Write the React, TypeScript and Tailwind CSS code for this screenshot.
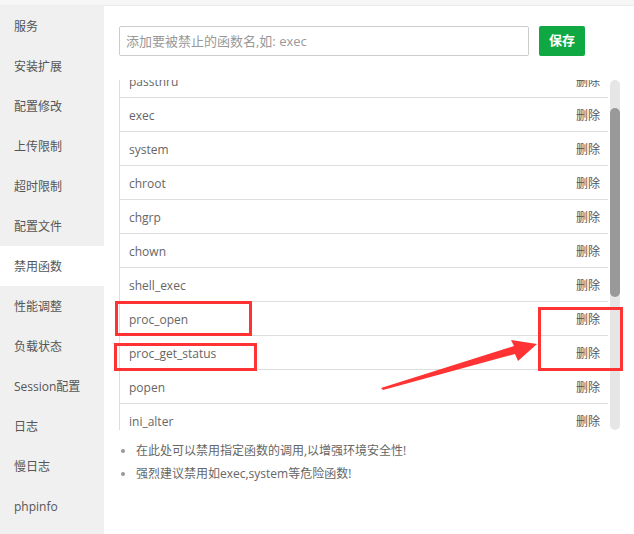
import React from "react";

const menu = ["服务", "安装扩展", "配置修改", "上传限制", "超时限制", "配置文件", "禁用函数", "性能调整", "负载状态", "Session配置", "日志", "慢日志", "phpinfo"];
const funcs = ["passthru", "exec", "system", "chroot", "chgrp", "chown", "shell_exec", "proc_open", "proc_get_status", "popen", "ini_alter", "ini_restore"];

export default function App() {
  return (
    <div
      className="relative w-[634px] h-[534px] overflow-hidden bg-white text-[12px]"
      style={{ fontFamily: '"Open Sans", "Noto Sans CJK SC", sans-serif' }}
    >
      <div className="h-[6px] bg-[#f6f6f6] border-b border-[#ececec]" />
      <div className="flex h-[528px]">
        <div className="w-[104px] bg-[#f0f0f0] flex flex-col">
          {menu.map((m) => (
            <div
              key={m}
              className={`h-[40px] shrink-0 flex items-center pl-[14px] pt-[2px] text-[#555] ${m === "禁用函数" ? "bg-white" : ""}`}
            >
              {m}
            </div>
          ))}
        </div>
        <div className="flex-1 pl-[15px] pt-[20px]">
          <div className="flex items-center gap-[10px]">
            <div className="w-[410px] h-[30px] border border-[#ccc] rounded-[2px] flex items-center pl-[6px] pt-[1px] text-[13px] text-[#999]">
              添加要被禁止的函数名,如: exec
            </div>
            <div className="w-[46px] h-[30px] rounded-[2px] bg-[#10a843] text-white flex items-center justify-center text-[13px] font-semibold">
              保存
            </div>
          </div>
          <div className="mt-[24px] flex h-[350px] w-[503px]">
            <div className="w-[489px] h-full overflow-hidden border-l border-[#ddd]">
              <div className="-mt-[16px]">
                {funcs.map((f) => (
                  <div key={f} className="h-[34px] border-b border-[#ddd] flex items-center justify-between pl-[9px] pr-[8px] pt-[2px]">
                    <span className="text-[#666]">{f}</span>
                    <span className="text-[#555]">删除</span>
                  </div>
                ))}
              </div>
            </div>
            <div className="w-[14px] h-full flex justify-center">
              <div className="w-[10px] h-full rounded-full bg-[#e6e6e6] pt-[28px]">
                <div className="h-[189px] w-full rounded-full bg-[#999]" />
              </div>
            </div>
          </div>
          <ul className="mt-[9px] text-[#666] flex flex-col">
            <li className="h-[23px] flex items-center pt-[1px]">
              <span className="w-[4px] h-[4px] rounded-full bg-[#999] ml-[2px] mr-[11px]" />
              <span>在此处可以禁用指定函数的调用,以增强环境安全性!</span>
            </li>
            <li className="h-[23px] flex items-center pt-[1px]">
              <span className="w-[4px] h-[4px] rounded-full bg-[#999] ml-[2px] mr-[11px]" />
              <span>强烈建议禁用如exec,system等危险函数!</span>
            </li>
          </ul>
        </div>
      </div>
      <div className="absolute left-[115px] top-[301px] w-[137px] h-[35px] border-[3px] border-[#f33]" />
      <div className="absolute left-[114px] top-[343px] w-[143px] h-[28px] border-[3px] border-[#f33]" />
      <div className="absolute left-[538px] top-[307px] w-[85px] h-[64px] border-[3px] border-[#f33]" />
      <svg className="absolute left-0 top-0" width="634" height="534">
        <polygon points="381,388 514,346 511,340 537,344 518,361 515,354 383,390" fill="#f33" />
      </svg>
    </div>
  );
}
